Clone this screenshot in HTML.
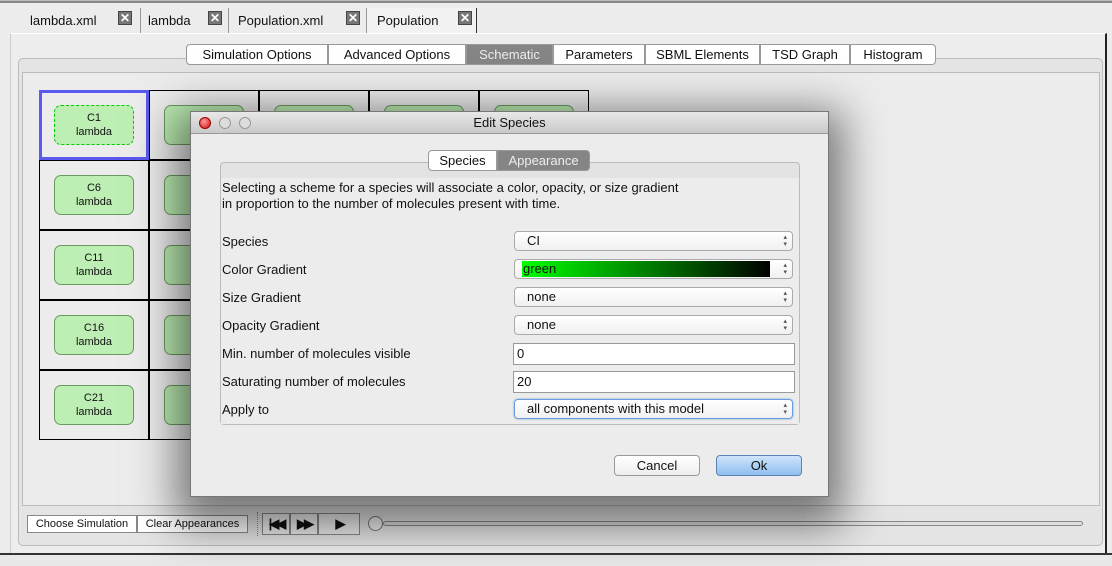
<!DOCTYPE html>
<html><head><meta charset="utf-8"><style>
*{box-sizing:border-box;margin:0;padding:0}
body{width:1112px;height:566px;background:#ececec;font-family:"Liberation Sans",sans-serif;font-size:13px;color:#111;position:relative;overflow:hidden}
.a{position:absolute}
.tab{position:absolute;top:8px;height:25px;line-height:25px;font-size:13px;padding-left:0}
.x{position:absolute;top:11px;width:14px;height:14px;background:#777;border:1px solid #444;color:#fff;font-size:12px;line-height:12px;text-align:center;font-weight:bold}
.itab{position:absolute;top:44px;height:21px;line-height:20px;font-size:13px;text-align:center;border:1px solid #999;background:#fff}
.cell{position:absolute;width:110px;height:70px;border:1px solid #000;margin:-1px 0 0 -1px}
.node{position:absolute;left:14px;top:14px;width:80px;height:40px;background:#bdeeb3;border:1px solid #6a9a60;border-radius:7px;text-align:center;font-size:11px;line-height:14px;padding-top:5px}
.lbl{position:absolute;left:222px;font-size:13px}
.sel{position:absolute;left:514px;width:279px;height:20px;border:1px solid #aaa;border-radius:4px;background:linear-gradient(#fff,#f0f0f0);font-size:13px;line-height:18px;padding-left:12px}
.sel:after{content:"▴\A▾";white-space:pre;position:absolute;right:5px;top:2px;font-size:7px;line-height:7px;color:#555}
.inp{position:absolute;left:513px;width:282px;height:22px;border:1px solid #999;background:#fff;font-size:13px;line-height:20px;padding-left:3px}
.btn{position:absolute;top:455px;height:21px;border:1px solid #999;border-radius:4px;text-align:center;font-size:13px;line-height:19px}
.sb{position:absolute;top:515px;height:18px;border:1px solid #888;background:#fff;font-size:11px;line-height:16px;text-align:center}
.pb{position:absolute;top:513px;width:28px;height:22px;border:1px solid #888;background:#ececec;font-size:13px;text-align:center;line-height:20px;font-weight:bold;letter-spacing:-3px}
</style></head><body>
<div class="a" style="left:0;top:0;width:1112px;height:3px;border-bottom:2px solid #888;border-top:1px solid #bbb"></div>
<div class="a" style="left:366px;top:8px;width:110px;height:26px;background:#f2f2f2"></div>
<div class="tab" style="left:30px">lambda.xml</div><div class="x" style="left:118px">✕</div>
<div class="a" style="left:140px;top:8px;width:1px;height:25px;background:#999"></div>
<div class="tab" style="left:148px">lambda</div><div class="x" style="left:208px">✕</div>
<div class="a" style="left:228px;top:8px;width:1px;height:25px;background:#999"></div>
<div class="tab" style="left:238px">Population.xml</div><div class="x" style="left:346px">✕</div>
<div class="a" style="left:366px;top:8px;width:1px;height:25px;background:#999"></div>
<div class="tab" style="left:377px">Population</div><div class="x" style="left:458px">✕</div>
<div class="a" style="left:476px;top:8px;width:1px;height:26px;background:#333"></div>
<div class="a" style="left:10px;top:33px;width:1097px;height:520px;border-top:1px solid #fff;border-left:1px solid #ccc;border-right:2px solid #222;background:#ededed"></div>
<div class="a" style="left:18px;top:58px;width:1085px;height:488px;border:1px solid #bbb;border-radius:5px;background:#e4e4e4"></div>
<div class="a" style="left:22px;top:72px;width:1078px;height:434px;border:1px solid #bbb;background:#ececec"></div>
<div class="itab" style="left:186px;width:142px;border-radius:4px 0 0 4px">Simulation Options</div>
<div class="itab" style="left:328px;width:138px">Advanced Options</div>
<div class="itab" style="left:466px;width:87px;background:#858585;color:#eee">Schematic</div>
<div class="itab" style="left:553px;width:92px">Parameters</div>
<div class="itab" style="left:645px;width:115px">SBML Elements</div>
<div class="itab" style="left:760px;width:90px">TSD Graph</div>
<div class="itab" style="left:850px;width:86px;border-radius:0 4px 4px 0">Histogram</div>
<div class="a" style="left:40px;top:91px">
<div class="cell" style="left:0;top:0;border:3px solid #5a5af0"><div class="node" style="left:12px;top:12px;border:1px dashed #0c0">C1<br>lambda</div></div>
<div class="cell" style="left:110px;top:0"><div class="node"></div></div>
<div class="cell" style="left:220px;top:0"><div class="node"></div></div>
<div class="cell" style="left:330px;top:0"><div class="node"></div></div>
<div class="cell" style="left:440px;top:0"><div class="node"></div></div>
<div class="cell" style="left:0;top:70px"><div class="node">C6<br>lambda</div></div>
<div class="cell" style="left:110px;top:70px"><div class="node"></div></div>
<div class="cell" style="left:0;top:140px"><div class="node">C11<br>lambda</div></div>
<div class="cell" style="left:110px;top:140px"><div class="node"></div></div>
<div class="cell" style="left:0;top:210px"><div class="node">C16<br>lambda</div></div>
<div class="cell" style="left:110px;top:210px"><div class="node"></div></div>
<div class="cell" style="left:0;top:280px"><div class="node">C21<br>lambda</div></div>
<div class="cell" style="left:110px;top:280px"><div class="node"></div></div>
</div>
<div class="sb" style="left:27px;width:110px">Choose Simulation</div>
<div class="sb" style="left:137px;width:111px">Clear Appearances</div>
<div class="a" style="left:257px;top:512px;height:24px;border-left:1px dotted #888"></div>
<div class="pb" style="left:262px">|◀◀</div><div class="pb" style="left:290px">▶▶</div><div class="pb" style="left:318px;width:42px">▶</div>
<div class="a" style="left:368px;top:516px;width:15px;height:15px;border:1px solid #777;border-radius:50%;background:#eee"></div>
<div class="a" style="left:383px;top:521px;width:700px;height:5px;border:1px solid #888;border-radius:3px;background:#ddd"></div>
<div class="a" style="left:0;top:553px;width:1112px;height:13px;border-top:2px solid #333;background:#e8e8e8"></div>
<!-- dialog -->
<div class="a" style="left:190px;top:111px;width:639px;height:386px;background:#ececec;border:1px solid #777;box-shadow:0 14px 40px 14px rgba(0,0,0,.5)">
<div class="a" style="left:0;top:0;width:637px;height:22px;background:linear-gradient(#e8e8e8,#c9c9c9);border-bottom:1px solid #999;text-align:center;line-height:22px;font-size:13px">Edit Species</div>
<div class="a" style="left:8px;top:5px;width:12px;height:12px;border-radius:50%;background:radial-gradient(circle at 40% 35%,#f99,#c11);border:1px solid #900"></div>
<div class="a" style="left:28px;top:5px;width:12px;height:12px;border-radius:50%;background:#ddd;border:1px solid #999"></div>
<div class="a" style="left:48px;top:5px;width:12px;height:12px;border-radius:50%;background:#ddd;border:1px solid #999"></div>
</div>
<div class="a" style="left:220px;top:162px;width:580px;height:263px;border:1px solid #bbb;border-radius:4px;background:#e3e3e3"></div>
<div class="a" style="left:221px;top:178px;width:578px;height:246px;background:#ececec"></div>
<div class="itab" style="top:150px;left:428px;width:69px;border-radius:4px 0 0 4px">Species</div>
<div class="itab" style="top:150px;left:497px;width:93px;background:#858585;color:#eee;border-radius:0 4px 4px 0">Appearance</div>
<div class="a" style="left:222px;top:180px;font-size:13px;line-height:16px">Selecting a scheme for a species will associate a color, opacity, or size gradient<br>in proportion to the number of molecules present with time.</div>
<div class="lbl" style="top:234px">Species</div><div class="sel" style="top:231px">CI</div>
<div class="lbl" style="top:262px">Color Gradient</div><div class="sel" style="top:259px;padding-left:0"><div class="a" style="left:7px;top:1px;width:248px;height:16px;background:linear-gradient(90deg,#0f0,#000);padding-left:1px;line-height:16px">green</div></div>
<div class="lbl" style="top:290px">Size Gradient</div><div class="sel" style="top:287px">none</div>
<div class="lbl" style="top:318px">Opacity Gradient</div><div class="sel" style="top:315px">none</div>
<div class="lbl" style="top:346px">Min. number of molecules visible</div><div class="inp" style="top:343px">0</div>
<div class="lbl" style="top:374px">Saturating number of molecules</div><div class="inp" style="top:371px">20</div>
<div class="lbl" style="top:402px">Apply to</div><div class="sel" style="top:399px;border:1px solid #6a9ae0;box-shadow:0 0 2px #7ab">all components with this model</div>
<div class="btn" style="left:614px;width:86px;background:linear-gradient(#fff,#eee)">Cancel</div>
<div class="btn" style="left:716px;width:86px;background:linear-gradient(#cfe4fb,#8fbef0);border-color:#5c83b8">Ok</div>
</body></html>
